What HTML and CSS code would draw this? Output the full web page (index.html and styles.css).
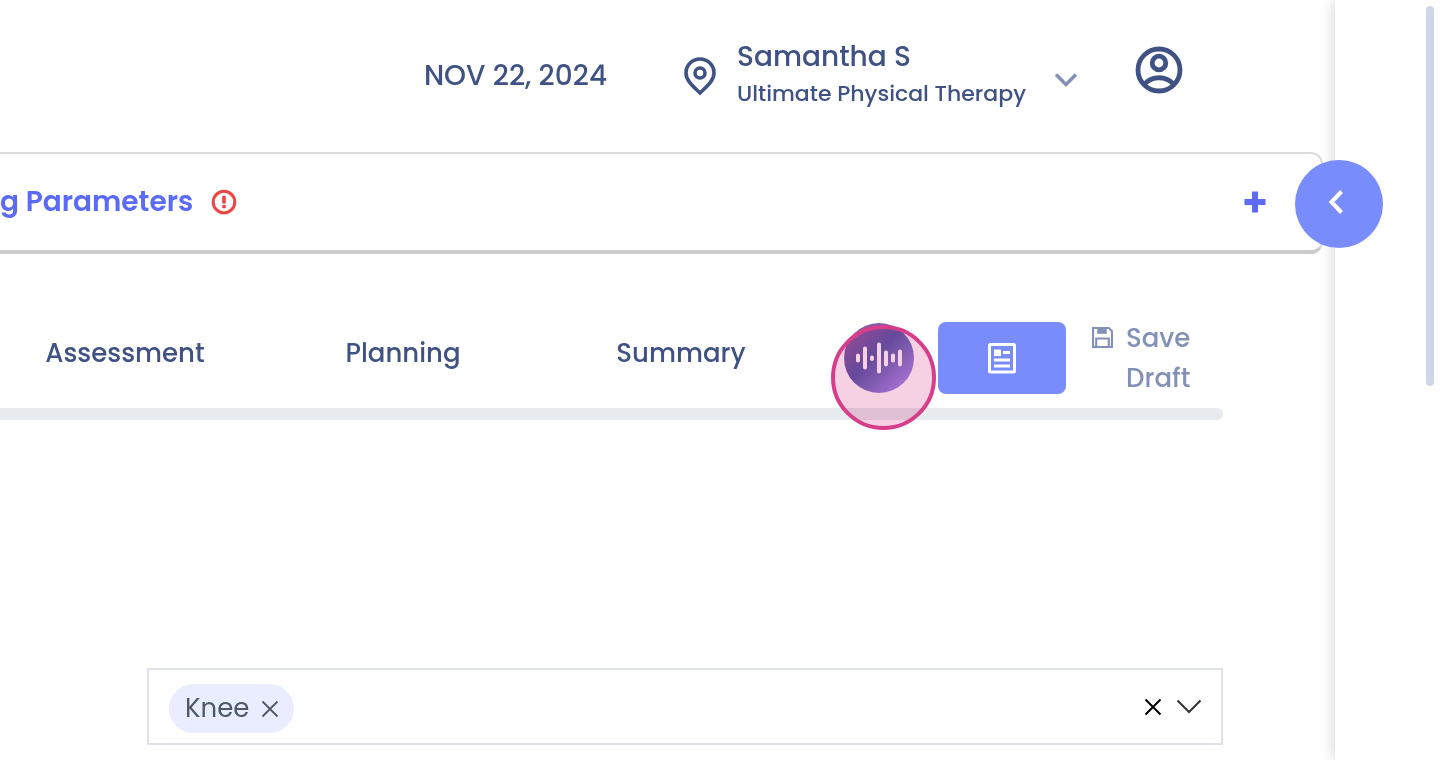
FILE: index.html
```html
<!DOCTYPE html>
<html lang="en">
<head>
<meta charset="utf-8">
<title>Patient visit</title>
<link rel="stylesheet" href="styles.css">
</head>
<body>
<div class="app">
  <main class="main">
    <header class="topbar">
      <time class="date" datetime="2024-11-22">NOV 22, 2024</time>
      <button class="location" type="button">
        <svg class="pin" viewBox="0 0 36 40" fill="none" stroke="currentColor" stroke-width="3.600"><path d="M18 37C12 31 4 25 4 17a14 14 0 0 1 28 0c0 8-8 14-14 20z"/><circle cx="18" cy="17" r="5"/></svg>
        <span class="who"><span class="name">Samantha S</span><span class="clinic">Ultimate Physical Therapy</span></span>
        <svg class="caret" viewBox="0 0 24 16" fill="none" stroke="currentColor" stroke-width="3.500"><path d="M2 2.500l10 10 10-10"/></svg>
      </button>
      <button class="account" type="button" aria-label="Account">
        <svg viewBox="0 0 48 48" fill="none" stroke="currentColor" stroke-width="4.800"><circle cx="24" cy="24" r="21"/><circle cx="24" cy="17" r="6.800"/><path d="M9 38.500C17 29.500 31 29.500 39 38.500"/></svg>
      </button>
    </header>

    <section class="parameters">
      <h2 class="parameters-title">g Parameters</h2>
      <svg class="alert" viewBox="0 0 26 26" fill="none" stroke="currentColor" stroke-width="3"><circle cx="13" cy="13" r="10.800"/><path stroke-width="3.600" d="M13 7v7.500M13 16v3.200"/></svg>
      <button class="expand" type="button" aria-label="Expand"><svg viewBox="0 0 22 22" fill="none" stroke="currentColor" stroke-width="6"><path d="M11 0.500v21M0.500 11h21"/></svg></button>
    </section>

    <div class="content">
      <div class="toolbar">
        <nav class="tabs">
          <a class="tab" href="#assessment">Assessment</a>
          <a class="tab" href="#planning">Planning</a>
          <a class="tab" href="#summary">Summary</a>
        </nav>
        <div class="voice">
          <button class="voice-button" type="button" aria-label="Record">
            <svg viewBox="0 0 48 32" fill="none" stroke="#fff" stroke-width="4" stroke-linecap="round"><path d="M3 13.500v5M10 6.500v19M17 15.500v1.500M24 2.500v27M31 10.500v12M38 13.500v5M45 9.500v13"/></svg>
          </button>
          <span class="halo"></span>
        </div>
        <button class="notes" type="button" aria-label="Notes">
          <svg viewBox="0 0 28 32" fill="none" stroke="#fff" stroke-width="3"><rect x="1.500" y="2.500" width="25" height="27.500" rx="1"/><path d="M6 18h16M6 24h16M15 10.500h7"/><path fill="#fff" stroke="none" d="M6 7.500h7v6.500H6z"/></svg>
        </button>
        <button class="save" type="button">
          <svg viewBox="0 0 20 20" fill="none" stroke="currentColor" stroke-width="2"><path d="M1 1h15l3 3v15H1z"/><path d="M4 19v-8h12v8"/><path fill="currentColor" stroke="none" d="M5 1h9v5.500H5z"/></svg>
          <span>Save<br>Draft</span>
        </button>
      </div>
      <div class="track"></div>

      <div class="picker">
        <span class="chip">Knee
          <button class="icon-button" type="button" aria-label="Remove Knee"><svg class="cross" viewBox="0 0 18 18" fill="none" stroke="currentColor" stroke-width="1.800"><path d="M1.500 1.500l15 15M16.500 1.500l-15 15"/></svg></button>
        </span>
        <input class="picker-input" type="text" aria-label="Body part">
        <button class="icon-button clear" type="button" aria-label="Clear all"><svg class="cross" viewBox="0 0 18 18" fill="none" stroke="currentColor" stroke-width="2"><path d="M1.500 1.500l15 15M16.500 1.500l-15 15"/></svg></button>
        <button class="icon-button open" type="button" aria-label="Open list"><svg class="arrow" viewBox="0 0 26 18" fill="none" stroke="currentColor" stroke-width="2"><path d="M1.500 2.500L13 14 24.500 2.500"/></svg></button>
      </div>
    </div>
  </main>

  <aside class="drawer">
    <button class="drawer-toggle" type="button" aria-label="Open panel"><svg viewBox="0 0 16 24" fill="none" stroke="#fff" stroke-width="4"><path d="M13.500 1.500L3.500 12l10 10.500"/></svg></button>
    <span class="thumb"></span>
  </aside>
</div>
</body>
</html>
```
FILE: styles.css
```css
* { box-sizing: border-box; }
body {
  margin: 0;
  overflow: hidden;
  background: #fff;
  color: #3f5283;
  font-family: Poppins, Inter, "Open Sans", sans-serif;
  font-weight: 500;
}
button {
  border: 0;
  padding: 0;
  background: none;
  color: inherit;
  font: inherit;
  cursor: pointer;
}
svg { display: block; flex: none; }
.app { display: flex; min-height: 100vh; }
.main { flex: 1; min-width: 0; }

.topbar {
  display: flex;
  align-items: center;
  justify-content: flex-end;
  height: 152px;
  padding-right: 152px;
}
.date { margin-right: 75px; font-size: 28px; line-height: 40px; }
.location { display: flex; align-items: center; text-align: left; }
.pin { width: 36px; height: 40px; margin-right: 19px; }
.who {
  display: flex;
  flex-direction: column;
  width: 294px;
  padding-bottom: 4px;
  white-space: nowrap;
}
.name { font-size: 28px; line-height: 40px; }
.clinic { font-size: 22px; line-height: 34px; }
.caret { width: 24px; height: 16px; margin: 8px 0 0 23px; color: #8391b6; }
.account { margin: 0 0 13px 57px; }
.account svg { width: 48px; height: 48px; }

.parameters {
  display: flex;
  align-items: center;
  height: 102px;
  margin-right: 12px;
  padding-right: 55px;
  border: 2px solid #dcdcdc;
  border-width: 2px 2px 4px 0;
  border-bottom-color: #ccc;
  border-radius: 0 12px 12px 0;
  color: #5b6bf8;
}
.parameters-title { margin: 0; font-size: 28px; line-height: 40px; font-weight: 600; }
.alert { width: 26px; height: 26px; margin-left: 18px; color: #ef4444; }
.expand { margin-left: auto; }
.expand svg { width: 22px; height: 22px; }

.content { padding: 68px 112px 16px 0; }
.toolbar { display: flex; align-items: center; height: 72px; }
.tabs { flex: 1; display: grid; grid-template-columns: repeat(3, 1fr); margin: -10px 24px 0 -14px; }
.tab { color: inherit; font-size: 26px; line-height: 40px; text-align: center; text-decoration: none; }
.voice { position: relative; margin-right: 24px; }
.voice-button {
  display: grid;
  place-items: center;
  width: 70px;
  height: 70px;
  border-radius: 50%;
  background: linear-gradient(135deg, #9a5aa4 8%, #6a5ab0 45%, #7f6cc0 60%, #b48cf4 92%);
}
.voice-button svg { width: 48px; height: 32px; }
.halo {
  position: absolute;
  top: 2px;
  left: -13px;
  width: 105px;
  height: 105px;
  border: 4px solid #d63e8a;
  border-radius: 50%;
  pointer-events: none;
}
.halo::before {
  content: "";
  position: absolute;
  inset: 0;
  border-radius: 50%;
  background: #f6d0e3;
  mix-blend-mode: multiply;
}
.notes {
  display: grid;
  place-items: center;
  width: 128px;
  height: 72px;
  border-radius: 8px;
  background: #788cfc;
}
.notes svg { width: 28px; height: 32px; }
.save {
  display: flex;
  gap: 13px;
  width: 131px;
  margin-left: 26px;
  color: #8391b6;
  font-size: 26px;
  line-height: 40px;
  text-align: left;
}
.save svg { width: 21px; height: 21px; margin-top: 9px; }
.track { height: 12px; margin-top: 14px; border-radius: 0 6px 6px 0; background: #e7ebee; }

.picker {
  display: flex;
  align-items: center;
  height: 77px;
  margin: 248px 0 0 147px;
  padding: 0 19px 0 20px;
  border: 2px solid #dfe3e9;
}
.chip {
  display: flex;
  align-items: center;
  gap: 12px;
  height: 49px;
  margin-top: 4px;
  padding: 0 15px 0 16px;
  border-radius: 25px;
  background: #eaedff;
  color: #4c5a69;
  font-size: 26px;
  font-weight: 400;
}
.picker-input { flex: 1; min-width: 0; border: 0; outline: 0; font: inherit; }
.cross { width: 18px; height: 18px; }
.arrow { width: 26px; height: 18px; }
.clear { margin-right: 14px; color: #000; }
.open { color: #333; }

.drawer {
  position: relative;
  display: flex;
  justify-content: flex-end;
  align-items: flex-start;
  width: 105px;
  padding: 6px;
  background: #fff;
  box-shadow: 0 0 14px rgba(0, 0, 0, .2);
}
.drawer-toggle {
  position: absolute;
  top: 160px;
  left: -40px;
  display: grid;
  place-items: center;
  width: 88px;
  height: 88px;
  border-radius: 50%;
  background: #788cfc;
}
.drawer-toggle svg { width: 16px; height: 24px; margin: 0 6px 4px 0; }
.thumb { width: 8px; height: 380px; border-radius: 4px; background: #cfd7ea; }
```
